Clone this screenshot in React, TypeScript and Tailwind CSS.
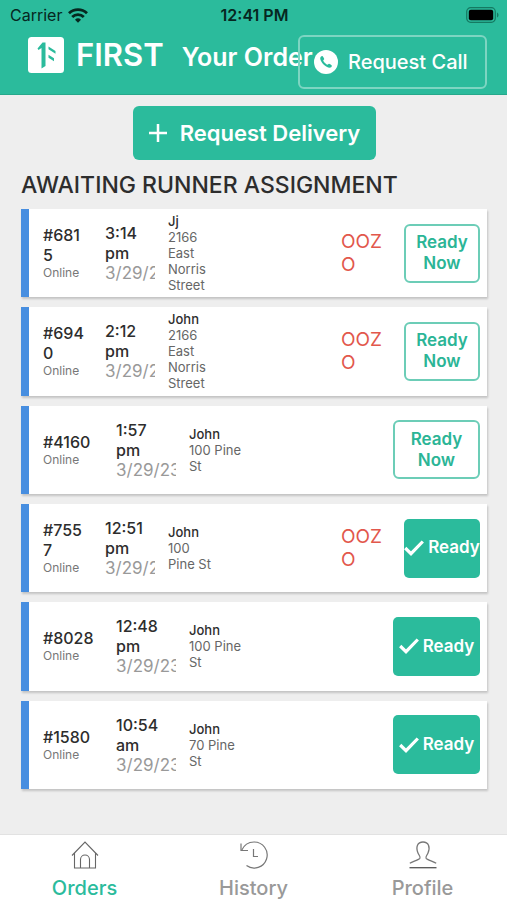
import { useState } from 'react'

type Order = {
  id: string
  source: string
  time: string
  date: string
  customer: string
  address: string
  flag?: string
  ready: boolean
}

const orders: Order[] = [
  { id: '#6815', source: 'Online', time: '3:14 pm', date: '3/29/23', customer: 'Jj', address: '2166 East Norris Street', flag: 'OOZO', ready: false },
  { id: '#6940', source: 'Online', time: '2:12 pm', date: '3/29/23', customer: 'John', address: '2166 East Norris Street', flag: 'OOZO', ready: false },
  { id: '#4160', source: 'Online', time: '1:57 pm', date: '3/29/23', customer: 'John', address: '100 Pine St', ready: false },
  { id: '#7557', source: 'Online', time: '12:51 pm', date: '3/29/23', customer: 'John', address: '100 Pine\u00a0St', flag: 'OOZO', ready: true },
  { id: '#8028', source: 'Online', time: '12:48 pm', date: '3/29/23', customer: 'John', address: '100 Pine St', ready: true },
  { id: '#1580', source: 'Online', time: '10:54 am', date: '3/29/23', customer: 'John', address: '70 Pine St', ready: true },
]

const tabs = [
  { name: 'Orders', icon: HomeIcon },
  { name: 'History', icon: HistoryIcon },
  { name: 'Profile', icon: ProfileIcon },
]

function HomeIcon() {
  return (
    <svg width="28" height="28" viewBox="0 0 28 28" fill="none" stroke="#666" strokeWidth="1.1">
      <path d="M1 14.5 14 1l13 13.500M3.500 12v15h21V12" />
      <path d="M9.500 27V18.500a4.500 4.500 0 0 1 9 0V27" />
    </svg>
  )
}

function HistoryIcon() {
  return (
    <svg width="28" height="28" viewBox="0 0 28 28" fill="none" stroke="#777" strokeWidth="1.2">
      <path d="M1 2.500v7h7" />
      <path d="M1.500 9.500C4 4 8.500 1 14 1a13 13 0 1 1-7.500 23.500" />
      <path d="M13.500 8v7.500H18" />
    </svg>
  )
}

function ProfileIcon() {
  return (
    <svg width="28" height="28" viewBox="0 0 28 28" fill="none" stroke="#777" strokeWidth="1.3">
      <path d="M.8 22.200C4 20.500 9 19 10.800 17.500c1.300-1.500-.8-3-1.800-5.500C6.500 6 8.500 1 14 1s7.500 5 5 11c-1 2.500-3.100 4-1.800 5.500C19 19 24 20.500 27.200 22.200" />
      <path d="M.5 26.700h27" stroke="#555" />
    </svg>
  )
}

function WifiIcon() {
  return (
    <svg width="20" height="15" viewBox="0 0 20 15" fill="none" stroke="#06271f" strokeWidth="2.800">
      <path d="M1 5.300a13 13 0 0 1 18 0M4.200 8.900a8.300 8.300 0 0 1 11.600 0" />
      <path d="M7 11.800a4.300 4.300 0 0 1 6 0L10 14.800z" fill="#06271f" stroke="none" />
    </svg>
  )
}

function BatteryIcon() {
  return (
    <svg width="33" height="16" viewBox="0 0 33 16">
      <rect x=".7" y=".7" width="28.600" height="14.600" rx="4" fill="none" stroke="#157a62" strokeWidth="1.200" />
      <rect x="2.800" y="2.800" width="24.400" height="10.400" rx="2" fill="#000" />
      <path d="M31 5.500c2 .8 2 4.200 0 5z" fill="#157a62" />
    </svg>
  )
}

function Logo() {
  return (
    <svg width="36" height="36" viewBox="0 0 36 36" className="shrink-0">
      <rect width="36" height="36" rx="3.500" fill="#fff" />
      <path d="M9.500 11.500 14.500 5.500H17.500V29L13.500 31.500V11l-3 2z" fill="#2bbb9c" />
      <path d="M20.500 9.500 27.500 14v2.800l-7-4.500zM20.500 17.800l5.500 3.500v2.900l-5.500-3.500z" fill="#2bbb9c" />
    </svg>
  )
}

function PhoneIcon() {
  return (
    <svg width="24" height="24" viewBox="0 0 24 24" className="shrink-0">
      <circle cx="12" cy="12" r="12" fill="#fff" />
      <path
        d="M6.200 8.300c0-1 1-2.200 2-2.200.5 0 2 2.300 2 2.900 0 .7-1 1-1 1.600 0 .9 3.300 4.200 4.200 4.200.6 0 .9-1 1.600-1 .6 0 2.900 1.500 2.900 2 0 1-1.200 2-2.200 2C12 17.800 6.200 12 6.200 8.300z"
        fill="#2bbb9c"
      />
    </svg>
  )
}

function OrderRow({ order }: { order: Order }) {
  const narrow = Boolean(order.flag)
  const column = narrow ? 'w-[50px]' : 'w-[60px]'

  return (
    <li className="flex items-center border-l-8 border-[#478ee0] bg-white pr-[7px] pl-3.5 shadow-[1px_2px_2px_rgba(0,0,0,0.18)]">
      <div className={`shrink-0 ${narrow ? 'w-[44px] mr-[18px]' : 'w-[54px] mr-[19px]'}`}>
        <p className="text-base leading-5 font-medium break-all text-[#2d2d2d]">{order.id}</p>
        <p className="text-xs leading-4 text-[#777]">{order.source}</p>
      </div>
      <div className={`mr-[13px] shrink-0 overflow-hidden ${column}`}>
        <p className={`text-base leading-5 font-medium text-[#2d2d2d] ${narrow ? 'w-[48px]' : 'w-[54px]'}`}>{order.time}</p>
        <p className="text-[17px] leading-5 whitespace-nowrap text-[#999]">{order.date}</p>
      </div>
      <div className={`shrink-0 text-[13px] leading-4 text-[#666] ${column}`}>
        <p className="font-medium text-[#2d2d2d]">{order.customer}</p>
        <p>{order.address}</p>
      </div>
      <div className="flex-1" />
      {order.flag && (
        <p className="mr-5 w-[43px] shrink-0 text-[19px] leading-[23px] break-all text-[#e2574c]">{order.flag}</p>
      )}
      {order.ready ? (
        <button
          type="button"
          className={`flex h-[59px] shrink-0 items-center justify-center gap-1 overflow-hidden rounded-[5px] bg-[#2bbb9c] text-[17px] font-semibold text-white ${narrow ? 'w-[76px]' : 'w-[87px]'}`}
        >
          <svg width="20" height="16" viewBox="0 0 20 16" fill="none" stroke="#fff" strokeWidth="3.200" className="shrink-0">
            <path d="m1.200 8 5.800 5.700L18.800 1.500" />
          </svg>
          Ready
        </button>
      ) : (
        <button
          type="button"
          className={`h-[59px] shrink-0 rounded-md border-2 border-[#6ccdb7] px-2 text-[17px] leading-[21px] font-semibold text-[#2bb596] ${narrow ? 'w-[76px]' : 'w-[87px]'}`}
        >
          Ready Now
        </button>
      )}
    </li>
  )
}

export default function App() {
  const [active, setActive] = useState('Orders')

  return (
    <div className="flex min-h-screen flex-col bg-[#eeeeee] font-['Inter','Liberation_Sans',sans-serif]">
      <header className="border-b border-[#26a88b] bg-[#2bbb9c]">
        {/* Status bar */}
        <div className="grid h-[30px] grid-cols-3 items-center pr-2 pl-2.5 text-[#06271f]">
          <div className="flex items-center gap-1.5 text-base">
            Carrier
            <WifiIcon />
          </div>
          <p className="text-center text-base font-semibold">12:41 PM</p>
          <div className="flex justify-end">
            <BatteryIcon />
          </div>
        </div>

        {/* Title bar */}
        <div className="flex items-start pt-[5px] pr-5 pb-[5px] pl-7">
          <div className="mt-0.5 flex shrink-0 gap-3">
            <Logo />
            <span className="text-[31px] leading-9 font-semibold text-white">FIRST</span>
          </div>
          <h1 className="mt-1.5 ml-[18px] w-0 flex-1 text-[25px] leading-8 font-semibold whitespace-nowrap text-white">Your Order</h1>
          <button
            type="button"
            className="flex h-[54px] w-[189px] shrink-0 items-center gap-2.5 rounded-md border-2 border-[#7dd5c2] pl-3.5 text-xl font-medium whitespace-nowrap text-white"
          >
            <PhoneIcon />
            Request Call
          </button>
        </div>
      </header>

      <main className="flex flex-1 flex-col pt-[11px] pr-5 pb-[45px] pl-[21px]">
        <button
          type="button"
          className="flex h-[54px] w-[243px] items-center justify-center gap-3 self-center rounded-md bg-[#2bbb9c] text-[22px] font-semibold whitespace-nowrap text-white"
        >
          <svg width="20" height="20" viewBox="0 0 20 20" stroke="#fff" strokeWidth="2.500" className="shrink-0">
            <path d="M10 1v18M1 10h18" />
          </svg>
          Request Delivery
        </button>
        <h2 className="mt-[9px] text-[23px] leading-8 font-medium text-[#2d2d2d]">AWAITING RUNNER ASSIGNMENT</h2>
        <ul className="mt-2 grid flex-1 auto-rows-fr gap-2.5">
          {orders.map((order) => (
            <OrderRow key={order.id} order={order} />
          ))}
        </ul>
      </main>

      {/* Bottom tabs */}
      <nav className="grid grid-cols-3 border-t border-[#e2e2e2] bg-white pt-1.5">
        {tabs.map((tab) => (
          <button
            key={tab.name}
            type="button"
            onClick={() => setActive(tab.name)}
            className={`flex flex-col items-center gap-[7px] text-xl leading-6 font-medium ${
              active === tab.name ? 'text-[#2bbb9c]' : 'text-[#999]'
            }`}
          >
            <tab.icon />
            {tab.name}
          </button>
        ))}
      </nav>
    </div>
  )
}
